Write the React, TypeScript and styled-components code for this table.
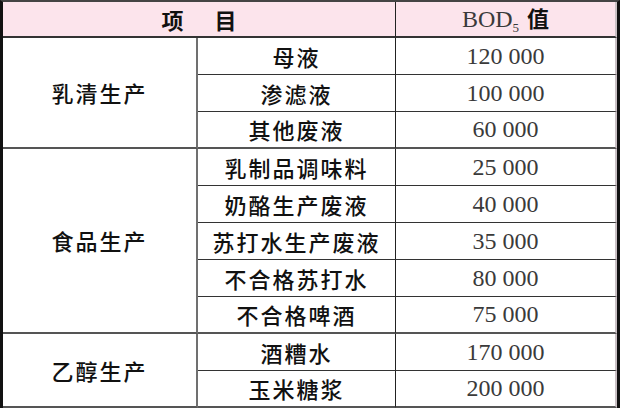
import React from 'react'
import styled, { createGlobalStyle } from 'styled-components'

type Row = {
  item: string
  value: string
}

type Group = {
  name: string
  rows: Row[]
}

const groups: Group[] = [
  {
    name: '乳清生产',
    rows: [
      { item: '母液', value: '120 000' },
      { item: '渗滤液', value: '100 000' },
      { item: '其他废液', value: '60 000' },
    ],
  },
  {
    name: '食品生产',
    rows: [
      { item: '乳制品调味料', value: '25 000' },
      { item: '奶酪生产废液', value: '40 000' },
      { item: '苏打水生产废液', value: '35 000' },
      { item: '不合格苏打水', value: '80 000' },
      { item: '不合格啤酒', value: '75 000' },
    ],
  },
  {
    name: '乙醇生产',
    rows: [
      { item: '酒糟水', value: '170 000' },
      { item: '玉米糖浆', value: '200 000' },
    ],
  },
]

const GlobalStyle = createGlobalStyle`
  html, body {
    margin: 0;
    padding: 0;
    background: #fff;
  }
`

const Table = styled.table`
  width: 620px;
  table-layout: fixed;
  border-collapse: separate;
  border-spacing: 0;
  border-left: 3px solid #111;
  border-right: 3px solid #111;
  border-top: 2px solid #444;
  font-family: 'Noto Sans CJK SC', 'Noto Sans', sans-serif;
  line-height: 1.2;
  color: #111;
`

const HeadCell = styled.th<{ $right?: boolean }>`
  box-sizing: border-box;
  height: 36px;
  padding: 0;
  background: #fce4ec;
  border-bottom: 2px solid #333;
  border-right: ${(p) => (p.$right ? '2px solid #c9c0c4' : '1px solid #222')};
  font-size: 22px;
  font-weight: 700;
  text-align: center;
  vertical-align: middle;
`

const Gap = styled.span`
  display: inline-block;
  width: 31px;
`

const Bod = styled.span`
  font-family: 'Liberation Serif', serif;
  font-weight: 400;
  font-size: 24px;
  color: #3a3a3a;
  margin-right: 8px;
  sub {
    font-size: 13px;
    line-height: 1;
    vertical-align: -5px;
  }
`

const GroupCell = styled.td`
  box-sizing: border-box;
  padding: 0;
  border-right: 2px solid #707070;
  border-bottom: 2px solid #555;
  font-size: 22px;
  font-weight: 500;
  letter-spacing: 2px;
  text-align: center;
  vertical-align: middle;
`

const ItemCell = styled.td<{ $last: boolean }>`
  box-sizing: border-box;
  height: 37px;
  padding: 0;
  border-right: 1px solid #222;
  border-bottom: ${(p) => (p.$last ? '2px solid #555' : '1px solid #333')};
  font-size: 22px;
  font-weight: 500;
  letter-spacing: 2px;
  text-align: center;
  vertical-align: middle;
`

const ValueCell = styled.td<{ $last: boolean }>`
  box-sizing: border-box;
  height: 37px;
  padding: 0;
  border-right: 2px solid #c9c0c4;
  border-bottom: ${(p) => (p.$last ? '2px solid #555' : '1px solid #333')};
  font-family: 'Liberation Serif', serif;
  font-size: 24px;
  color: #3a3a3a;
  text-align: center;
  vertical-align: middle;
`

const App: React.FC = () => {
  return (
    <>
      <GlobalStyle />
      <Table>
        <colgroup>
          <col style={{ width: 195 }} />
          <col style={{ width: 198 }} />
          <col style={{ width: 221 }} />
        </colgroup>
        <thead>
          <tr>
            <HeadCell colSpan={2}>
              项<Gap />目
            </HeadCell>
            <HeadCell $right>
              <Bod>
                BOD<sub>5</sub>
              </Bod>
              值
            </HeadCell>
          </tr>
        </thead>
        <tbody>
          {groups.map((group) =>
            group.rows.map((row, i) => {
              const last = i === group.rows.length - 1
              return (
                <tr key={row.item}>
                  {i === 0 && (
                    <GroupCell rowSpan={group.rows.length}>{group.name}</GroupCell>
                  )}
                  <ItemCell $last={last}>{row.item}</ItemCell>
                  <ValueCell $last={last}>{row.value}</ValueCell>
                </tr>
              )
            }),
          )}
        </tbody>
      </Table>
    </>
  )
}

export default App
